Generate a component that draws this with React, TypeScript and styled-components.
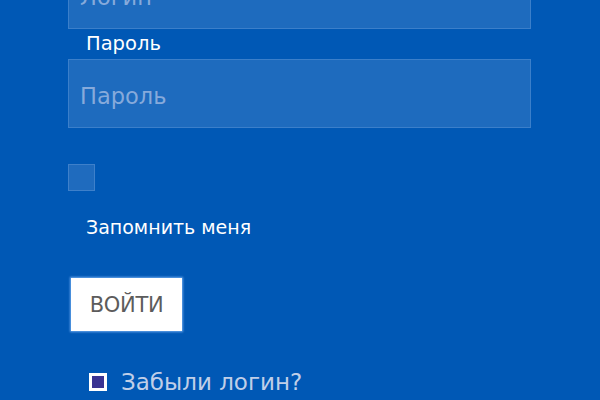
import React from "react";
import styled, { createGlobalStyle } from "styled-components";

const GlobalStyle = createGlobalStyle`
  html, body {
    margin: 0;
    padding: 0;
    background: #0058b5;
    height: 100%;
    overflow: hidden;
  }
  body {
    font-family: "DejaVu Sans", "Noto Sans", sans-serif;
  }
`;

const Page = styled.div`
  width: 600px;
  height: 400px;
  background: #0058b5;
  overflow: hidden;
`;

const Form = styled.form`
  width: 463px;
  margin: -40px 0 0 68px;
  display: flex;
  flex-direction: column;
`;

const Label = styled.label`
  color: #ffffff;
  font-size: 19.5px;
  line-height: 30px;
  padding-left: 18px;
`;

const Input = styled.input`
  box-sizing: border-box;
  width: 100%;
  height: 69px;
  margin: 0;
  padding: 4px 11px 0;
  background: #1e6bbe;
  border: 1px solid #3b7fca;
  color: #ffffff;
  font-family: "DejaVu Sans", sans-serif;
  font-size: 22.5px;
  outline: none;

  &::placeholder {
    color: #86aadb;
  }
`;

const CheckBox = styled.input.attrs({ type: "checkbox" })`
  appearance: none;
  box-sizing: border-box;
  width: 27px;
  height: 27px;
  margin: 36px 0 0 0;
  background: #1f6bbe;
  border: 1px solid #3e80ca;
`;

const CheckLabel = styled.span`
  color: #ffffff;
  font-size: 19px;
  line-height: 26px;
  padding-left: 18px;
  margin-top: 23px;
`;

const Submit = styled.button`
  align-self: flex-start;
  box-sizing: border-box;
  width: 111px;
  height: 53px;
  margin: 38px 0 0 3px;
  background: #ffffff;
  border: none;
  box-shadow: 0 0 2px 1px #6aa8ee;
  color: #5c5c5c;
  font-family: "DejaVu Sans", sans-serif;
  font-size: 21px;
  letter-spacing: -0.3px;
  cursor: pointer;
`;

const Links = styled.ul`
  list-style: none;
  margin: 36px 0 0 21px;
  padding: 0;
`;

const LinkItem = styled.li`
  display: flex;
  align-items: center;
  gap: 14px;
  color: #c0cfe8;
  font-size: 23px;
  line-height: 30px;
`;

const Bullet = styled.span`
  box-sizing: border-box;
  width: 18px;
  height: 18px;
  border: 3px solid #ffffff;
  background: #3a3392;
`;

export default function App() {
  return (
    <Page>
      <GlobalStyle />
      <Form onSubmit={(e) => e.preventDefault()}>
        <Input placeholder="Логин" />
        <Label>Пароль</Label>
        <Input type="password" placeholder="Пароль" />
        <CheckBox />
        <CheckLabel>Запомнить меня</CheckLabel>
        <Submit type="submit">ВОЙТИ</Submit>
        <Links>
          <LinkItem>
            <Bullet />
            Забыли логин?
          </LinkItem>
        </Links>
      </Form>
    </Page>
  );
}
